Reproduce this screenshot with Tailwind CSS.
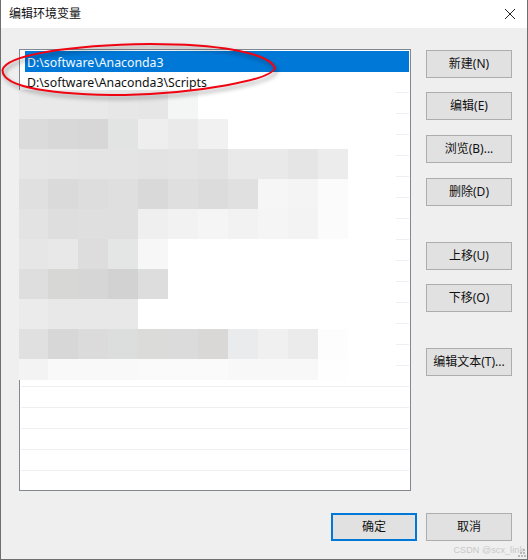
<!DOCTYPE html>
<html lang="zh">
<head>
<meta charset="utf-8">
<script src="https://cdn.jsdelivr.net/npm/@tailwindcss/browser@4"></script>
</head>
<body class="m-0 bg-[#efefef]">
<div class="relative w-[528px] h-[560px] overflow-hidden flex flex-col bg-[#efefef] border-l border-b border-r border-[#6e6e6e] font-['Noto_Sans','Noto_Sans_CJK_SC',sans-serif] text-[12px] text-[#111]">
  <div class="h-[28px] shrink-0 bg-white flex items-center justify-between pl-[8px] pr-[9px]">
    <span class="text-[12px]">编辑环境变量</span>
    <svg width="12" height="12" viewBox="0 0 12 12" class="mr-[2px]"><path d="M1 1L11 11M11 1L1 11" stroke="#222" stroke-width="1" fill="none"/></svg>
  </div>
  <div class="flex-1 flex pl-[18px] pt-[21px]">
    <div class="relative w-[392px] h-[442px] bg-white border border-[#828790] pt-[1px] pl-[1px] pr-[1px]">
      <div class="h-[21px] ml-[4px] bg-[#0078d7] text-[#f4f9fd] flex items-center pl-[2px] pt-[3px] text-[12.3px] leading-none">D:\software\Anaconda3</div>
      <div class="h-[21px] flex items-center pl-[6px] pt-[2px] border-b border-[#efefef] text-[12.3px] leading-none">D:\software\Anaconda3\Scripts</div>
      <div class="h-[21px] border-b border-[#efefef]"></div><div class="h-[21px] border-b border-[#efefef]"></div><div class="h-[21px] border-b border-[#efefef]"></div><div class="h-[21px] border-b border-[#efefef]"></div><div class="h-[21px] border-b border-[#efefef]"></div><div class="h-[21px] border-b border-[#efefef]"></div><div class="h-[21px] border-b border-[#efefef]"></div><div class="h-[21px] border-b border-[#efefef]"></div><div class="h-[21px] border-b border-[#efefef]"></div><div class="h-[21px] border-b border-[#efefef]"></div><div class="h-[21px] border-b border-[#efefef]"></div><div class="h-[21px] border-b border-[#efefef]"></div><div class="h-[21px] border-b border-[#efefef]"></div><div class="h-[21px] border-b border-[#efefef]"></div><div class="h-[21px] border-b border-[#efefef]"></div><div class="h-[21px] border-b border-[#efefef]"></div><div class="h-[21px] border-b border-[#efefef]"></div><div class="h-[21px] border-b border-[#efefef]"></div>
    </div>
    <div class="ml-[15px] mt-[1px] w-[86px] flex flex-col">
      <button class="w-[86px] h-[28px] bg-[#e1e1e1] border border-[#adadad] mb-[14px]">新建(N)</button>
      <button class="w-[86px] h-[28px] bg-[#e1e1e1] border border-[#adadad] mb-[15px]">编辑(E)</button>
      <button class="w-[86px] h-[28px] bg-[#e1e1e1] border border-[#adadad] mb-[15px]">浏览(B)...</button>
      <button class="w-[86px] h-[28px] bg-[#e1e1e1] border border-[#adadad] mb-[36px]">删除(D)</button>
      <button class="w-[86px] h-[28px] bg-[#e1e1e1] border border-[#adadad] mb-[14px]">上移(U)</button>
      <button class="w-[86px] h-[28px] bg-[#e1e1e1] border border-[#adadad] mb-[36px]">下移(O)</button>
      <button class="w-[86px] h-[28px] bg-[#e1e1e1] border border-[#adadad]">编辑文本(T)...</button>
    </div>
  </div>
  <div class="h-[46px] shrink-0 flex justify-end gap-[9px] pr-[15px]">
    <button class="w-[86px] h-[28px] bg-[#e1e1e1] border-2 border-[#0078d7]">确定</button>
    <button class="w-[86px] h-[28px] bg-[#e1e1e1] border border-[#adadad]">取消</button>
  </div>
  <div class="absolute left-[18px] top-[90px] w-[377px] h-[290px] bg-white">
  <div class="w-[330px] h-[290px] grid grid-cols-[29px_30px_30px_30px_30px_30px_30px_30px_30px_30px_30px] grid-rows-[29px_30px_30px_30px_30px_30px_30px_30px_30px_21px]">
    <div class="bg-[#e9e9e9]"></div><div class="bg-[#e9e9e9]"></div><div class="bg-[#e9e9e9]"></div><div class="bg-[#e7e7e7]"></div><div class="bg-[#e6e6e6]"></div><div class="bg-[#f4f6f5]"></div><div></div><div></div><div></div><div></div><div></div>
    <div class="bg-[#dbdbdb]"></div><div class="bg-[#d8d8d8]"></div><div class="bg-[#d7d7d7]"></div><div class="bg-[#e2e4e3]"></div><div class="bg-[#eeeeee]"></div><div class="bg-[#eaeaea]"></div><div class="bg-[#f1f1f1]"></div><div></div><div></div><div></div><div></div>
    <div class="bg-[#e6e6e6]"></div><div class="bg-[#e5e5e5]"></div><div class="bg-[#e4e4e4]"></div><div class="bg-[#e4e4e4]"></div><div class="bg-[#e3e3e3]"></div><div class="bg-[#e4e4e4]"></div><div class="bg-[#e2e2e2]"></div><div class="bg-[#e9e9e9]"></div><div class="bg-[#e9e9e9]"></div><div class="bg-[#e5e5e5]"></div><div class="bg-[#ececec]"></div>
    <div class="bg-[#e0e0e0]"></div><div class="bg-[#dadada]"></div><div class="bg-[#dddddd]"></div><div class="bg-[#dfdfdf]"></div><div class="bg-[#d9d9d9]"></div><div class="bg-[#dfdfdf]"></div><div class="bg-[#dcdcdc]"></div><div class="bg-[#e0e0e0]"></div><div class="bg-[#f6f6f6]"></div><div class="bg-[#f4f4f4]"></div><div class="bg-[#fbfbfb]"></div>
    <div class="bg-[#e3e3e3]"></div><div class="bg-[#dedede]"></div><div class="bg-[#dfdfdf]"></div><div class="bg-[#dfdfdf]"></div><div class="bg-[#efefef]"></div><div class="bg-[#f2f2f2]"></div><div class="bg-[#f5f5f5]"></div><div class="bg-[#f2f2f2]"></div><div class="bg-[#f5f5f5]"></div><div class="bg-[#f3f3f3]"></div><div class="bg-[#fbfbfb]"></div>
    <div class="bg-[#e6e6e6]"></div><div class="bg-[#e8e8e8]"></div><div class="bg-[#dddddd]"></div><div class="bg-[#e4e6e5]"></div><div class="bg-[#f7f7f7]"></div><div></div><div></div><div></div><div></div><div></div><div></div>
    <div class="bg-[#dedede]"></div><div class="bg-[#d7d7d5]"></div><div class="bg-[#d6d6d6]"></div><div class="bg-[#d2d2d2]"></div><div class="bg-[#dddddd]"></div><div></div><div></div><div></div><div></div><div></div><div></div>
    <div class="bg-[#ebebeb]"></div><div class="bg-[#e8e8e8]"></div><div class="bg-[#e8e8e8]"></div><div class="bg-[#e8e8e8]"></div><div></div><div></div><div></div><div></div><div></div><div></div><div></div>
    <div class="bg-[#e0e0e0]"></div><div class="bg-[#d7d7d7]"></div><div class="bg-[#dbdbdb]"></div><div class="bg-[#dcdedd]"></div><div class="bg-[#dbdbd9]"></div><div class="bg-[#dbdbdb]"></div><div class="bg-[#d9d8d6]"></div><div class="bg-[#eaebed]"></div><div class="bg-[#f0f0f0]"></div><div class="bg-[#ebebeb]"></div><div class="bg-[#fdfdfd]"></div>
    <div class="bg-[#f3f3f3]"></div><div class="bg-[#f9f9f9]"></div><div class="bg-[#f9f9f9]"></div><div class="bg-[#f9f9f9]"></div><div class="bg-[#fafafa]"></div><div class="bg-[#fafafa]"></div><div class="bg-[#fafafa]"></div><div class="bg-[#f8f8f8]"></div><div class="bg-[#f8f8f8]"></div><div class="bg-[#f8f8f8]"></div><div class="bg-[#fefefe]"></div>
  </div>
  </div>
  <svg class="absolute left-[-1px] top-0 pointer-events-none" width="528" height="560" viewBox="0 0 528 560">
    <defs><filter id="s" x="-10%" y="-40%" width="120%" height="180%"><feGaussianBlur stdDeviation="2"/></filter></defs>
    <path d="M2.5 70 C6 55 70 45 150 44 C215 44 268 52 275 68 C271 80 200 93 125 95 C55 95 2 88 2.5 70 Z" fill="none" stroke="#000" stroke-opacity=".4" stroke-width="2" filter="url(#s)" transform="translate(2 3)"/>
    <path d="M2.5 70 C6 55 70 45 150 44 C215 44 268 52 275 68 C271 80 200 93 125 95 C55 95 2 88 2.5 70 Z" fill="none" stroke="#f00412" stroke-width="2"/>
  </svg>
  <div class="absolute right-[3px] bottom-[4px] text-[9px] leading-none text-[#c8c8c8] font-['Liberation_Sans',sans-serif] tracking-[0.1px]">CSDN @scx_link</div>
  <svg class="absolute right-[1px] bottom-[2px]" width="8" height="8" viewBox="0 0 8 8" fill="#b8b8b8"><rect x="5" y="0" width="2" height="2"/><rect x="2" y="3" width="2" height="2"/><rect x="5" y="3" width="2" height="2"/><rect x="0" y="6" width="2" height="2"/><rect x="3" y="6" width="2" height="2"/><rect x="6" y="6" width="2" height="2"/></svg>
</div>
</body>
</html>
